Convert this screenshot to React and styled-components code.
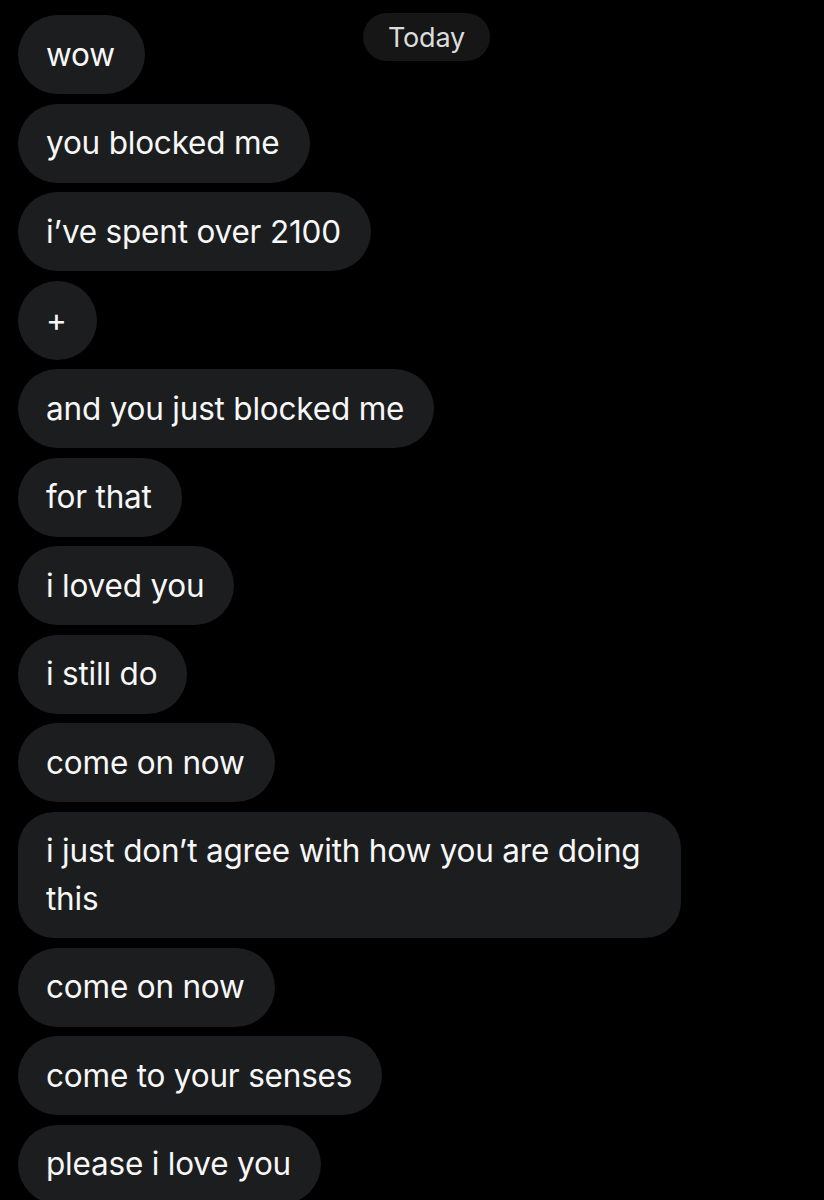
import React from "react";
import styled, { createGlobalStyle } from "styled-components";

const Global = createGlobalStyle`
  html, body {
    margin: 0;
    padding: 0;
    background: #000;
  }
  body {
    font-family: Inter, "Noto Sans", "Liberation Sans", sans-serif;
    -webkit-font-smoothing: antialiased;
  }
`;

const Screen = styled.div`
  position: relative;
  width: 824px;
  height: 1200px;
  overflow: hidden;
  background: #000;
`;

const Thread = styled.div`
  display: flex;
  flex-direction: column;
  align-items: flex-start;
  gap: 9.5px;
  padding: 15px 18px 0 18px;
`;

const Bubble = styled.div`
  box-sizing: border-box;
  max-width: 663px;
  padding: 15.75px 30px 15.75px 28px;
  background: #1c1d1f;
  color: #f7f7f7;
  font-size: 31.5px;
  line-height: 47.5px;
  letter-spacing: -0.2px;
  border-radius: ${(p) => (p.$multi ? "36px" : "40px")};
`;

const DatePill = styled.div`
  position: absolute;
  top: 13px;
  left: 363px;
  height: 48px;
  padding: 0 25px;
  display: flex;
  align-items: center;
  background: #161616;
  color: #dcdcdc;
  font-size: 27px;
  letter-spacing: -0.2px;
  border-radius: 24px;
`;

const messages = [
  "wow",
  "you blocked me",
  "i\u2019ve spent over 2100",
  "+",
  "and you just blocked me",
  "for that",
  "i loved you",
  "i still do",
  "come on now",
  "i just don\u2019t agree with how you are doing this",
  "come on now",
  "come to your senses",
  "please i love you",
];

export default function App() {
  return (
    <>
      <Global />
      <Screen>
        <Thread>
          {messages.map((m, i) => (
            <Bubble key={i} $multi={m.length > 30}>
              {m}
            </Bubble>
          ))}
        </Thread>
        <DatePill>Today</DatePill>
      </Screen>
    </>
  );
}
